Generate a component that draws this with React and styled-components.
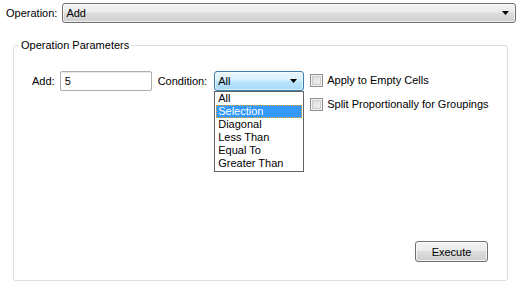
import React, { useState } from 'react'
import styled, { createGlobalStyle } from 'styled-components'

const GlobalStyle = createGlobalStyle`
  html, body {
    margin: 0;
    padding: 0;
    background: #ffffff;
  }
  body {
    font-family: "Liberation Sans", Arial, sans-serif;
    font-size: 11px;
    color: #000;
  }
`

const conditions = ['All', 'Selection', 'Diagonal', 'Less Than', 'Equal To', 'Greater Than']

const Arrow = () => (
    <svg width="7" height="4" viewBox="0 0 7 4">
        <path d="M0 0 H7 L3.5 4 Z" fill="#000" />
    </svg>
)

const App = () => {
    const [add, setAdd] = useState('5')
    const [hover] = useState('Selection')

    return (
        <Page>
            <GlobalStyle />
            <TopRow>
                <Label>Operation:</Label>
                <Combo>
                    <span>Add</span>
                    <Arrow />
                </Combo>
            </TopRow>
            <Group>
                <Legend>Operation Parameters</Legend>
                <ParamRow>
                    <Label gap="5px">Add:</Label>
                    <TextBox value={add} onChange={(e) => setAdd(e.target.value)} />
                    <Label gap="7px">Condition:</Label>
                    <DropWrap>
                        <Combo focused width="90px">
                            <span>All</span>
                            <Arrow />
                        </Combo>
                        <DropList>
                            {conditions.map((c) => (
                                <DropItem key={c} selected={c === hover}>{c}</DropItem>
                            ))}
                        </DropList>
                    </DropWrap>
                    <Checks>
                        <CheckRow>
                            <Box />
                            <span>Apply to Empty Cells</span>
                        </CheckRow>
                        <CheckRow>
                            <Box />
                            <span>Split Proportionally for Groupings</span>
                        </CheckRow>
                    </Checks>
                </ParamRow>
                <Footer>
                    <Button>Execute</Button>
                </Footer>
            </Group>
        </Page>
    )
}

const Page = styled.div({
    width: '522px',
    height: '290px',
    boxSizing: 'border-box',
    display: 'flex',
    flexDirection: 'column',
})

const TopRow = styled.div({
    display: 'flex',
    alignItems: 'center',
    gap: '5px',
    padding: '3px 6px 0 6px',
    height: '20px',
})

const Label = styled.span(({ gap }) => ({
    whiteSpace: 'nowrap',
    lineHeight: '20px',
    marginRight: gap || 0,
}))

const Combo = styled.div(({ focused, width }) => ({
    flex: width ? 'none' : 1,
    width: width || 'auto',
    height: '20px',
    boxSizing: 'border-box',
    display: 'flex',
    alignItems: 'center',
    justifyContent: 'space-between',
    padding: '0 6px 0 3px',
    border: focused ? '1px solid #3c7fb1' : '1px solid #707070',
    borderRadius: '3px',
    background: focused
        ? 'linear-gradient(to bottom, #eaf6fd 0%, #d9f0fc 45%, #bee6fd 50%, #a7d9f5 100%)'
        : 'linear-gradient(to bottom, #f2f2f2 0%, #ebebeb 45%, #dddddd 50%, #cfcfcf 100%)',
    boxShadow: 'inset 0 0 0 1px rgba(255,255,255,0.6)',
    span: {
        lineHeight: '18px',
    },
}))

const Group = styled.fieldset({
    margin: '15px 14px 9px 13px',
    padding: '0',
    border: '1px solid #d5dfe5',
    borderRadius: '3px',
    flex: 1,
    minWidth: 0,
    display: 'flex',
    flexDirection: 'column',
})

const Legend = styled.legend({
    marginLeft: '5px',
    padding: '0 2px',
    lineHeight: '14px',
})

const ParamRow = styled.div({
    display: 'flex',
    alignItems: 'flex-start',
    padding: '19px 0 0 18px',
})

const TextBox = styled.input({
    width: '92px',
    height: '20px',
    boxSizing: 'border-box',
    margin: '0 6px 0 0',
    padding: '0 4px',
    border: '1px solid #abadb3',
    borderTopColor: '#abadb3',
    borderRadius: '2px',
    fontFamily: 'inherit',
    fontSize: '11px',
    outline: 'none',
    boxShadow: 'inset 0 1px 0 #e3e9ef',
})

const DropWrap = styled.div({
    position: 'relative',
})

const DropList = styled.div({
    position: 'absolute',
    top: '20px',
    left: '0',
    width: '90px',
    boxSizing: 'border-box',
    border: '1px solid #646464',
    background: '#fff',
    padding: '0 1px 1px',
    zIndex: 2,
})

const DropItem = styled.div(({ selected }) => ({
    height: '13px',
    lineHeight: '13px',
    padding: '0 2px',
    boxSizing: 'border-box',
    background: selected ? '#3399ff' : 'transparent',
    color: selected ? '#fff' : '#000',
    outline: selected ? '1px dotted #f5a623' : 'none',
    outlineOffset: '-1px',
    whiteSpace: 'nowrap',
}))

const Checks = styled.div({
    display: 'flex',
    flexDirection: 'column',
    gap: '11px',
    marginLeft: '6px',
    paddingTop: '3px',
})

const CheckRow = styled.label({
    display: 'flex',
    alignItems: 'center',
    gap: '4px',
    lineHeight: '13px',
})

const Box = styled.span({
    width: '13px',
    height: '13px',
    boxSizing: 'border-box',
    border: '1px solid #8e8f8f',
    background: 'linear-gradient(135deg, #dcdcdc 0%, #f4f4f4 100%)',
    boxShadow: 'inset 0 0 0 1px #f4f4f4, inset 0 0 0 2px #cbcbcb',
})

const Footer = styled.div({
    marginTop: 'auto',
    display: 'flex',
    justifyContent: 'flex-end',
    padding: '0 19px 18px 0',
})

const Button = styled.button({
    width: '73px',
    height: '21px',
    boxSizing: 'border-box',
    border: '1px solid #707070',
    borderRadius: '3px',
    background: 'linear-gradient(to bottom, #f2f2f2 0%, #ebebeb 45%, #dddddd 50%, #cfcfcf 100%)',
    boxShadow: 'inset 0 0 0 1px rgba(255,255,255,0.7)',
    fontFamily: 'inherit',
    fontSize: '11px',
    color: '#000',
    padding: 0,
    cursor: 'pointer',
})

export default App
